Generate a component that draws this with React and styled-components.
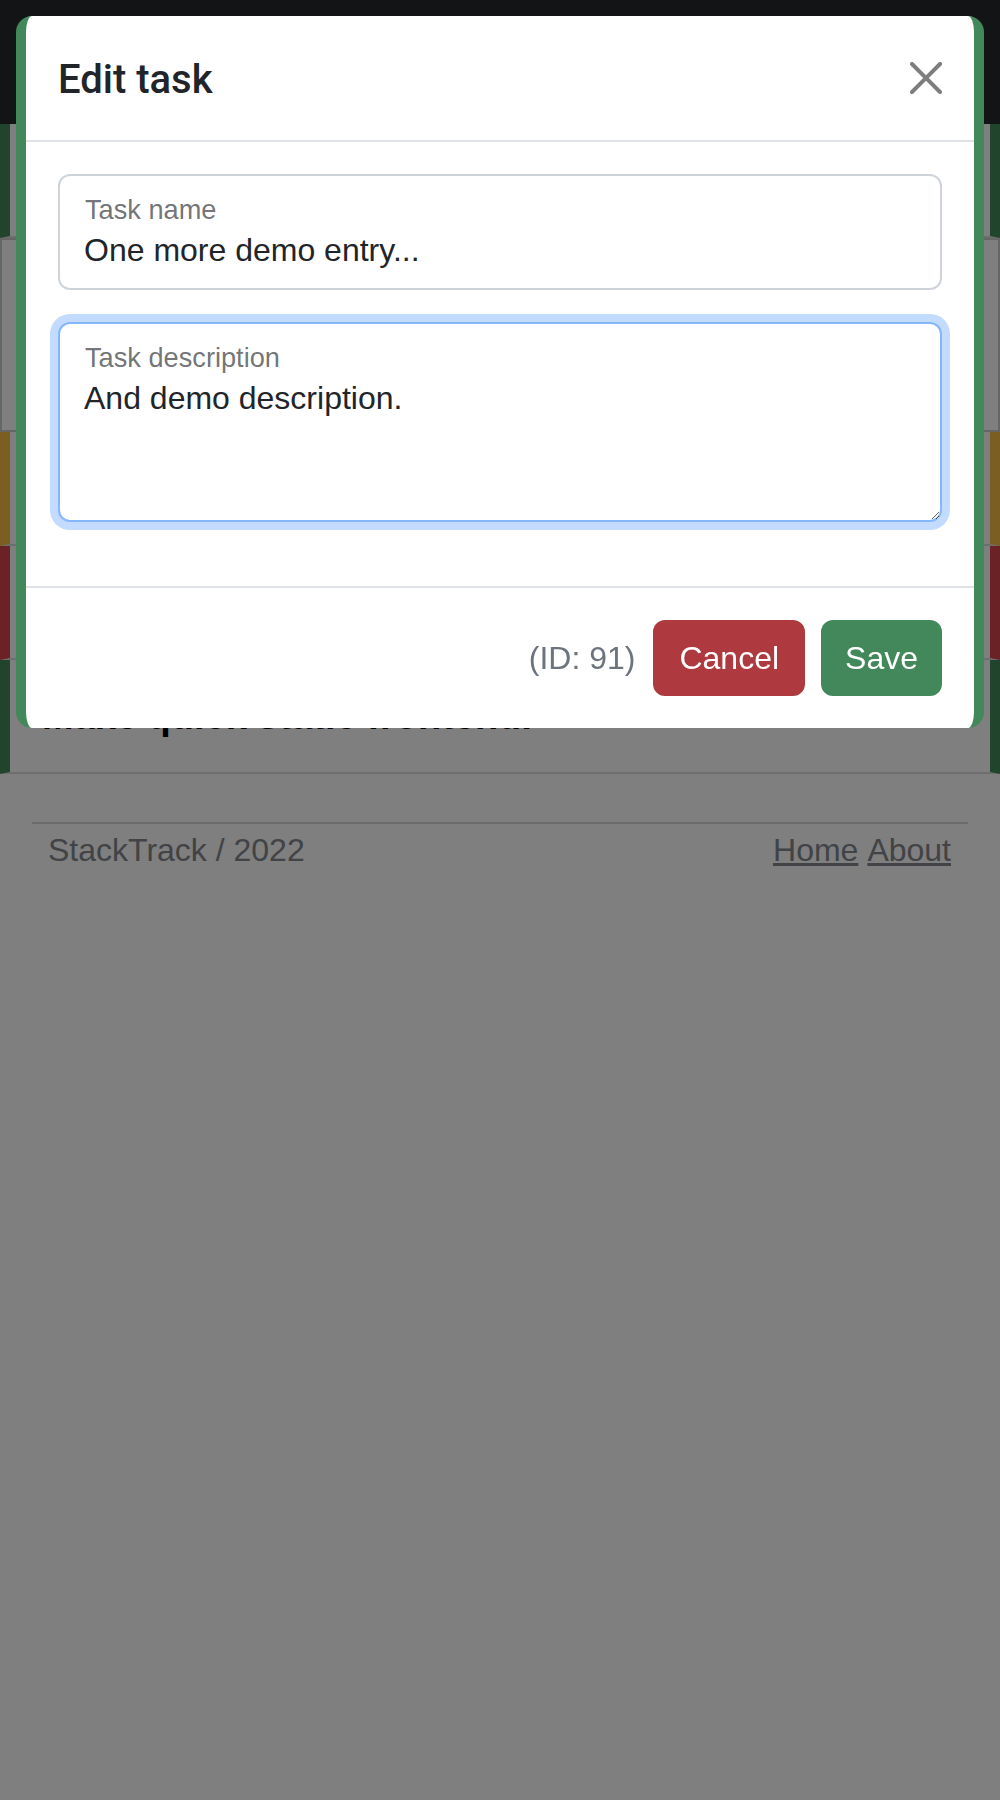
import React from 'react';
import styled, { createGlobalStyle, css } from 'styled-components';
import { ChevronDown } from 'lucide-react';

const GlobalStyle = createGlobalStyle`
  html, body { margin: 0; padding: 0; }
  body {
    font-family: "Liberation Sans", Arial, sans-serif;
    background: #ffffff;
    color: #212529;
  }
  *, *::before, *::after { box-sizing: border-box; }
`;

const Page = styled.div`
  min-height: 1800px;
  background: #ffffff;
`;

const Navbar = styled.nav`
  height: 124px;
  background: #26282c;
`;

const TaskList = styled.ul`
  list-style: none;
  margin: 0;
  padding: 0;
`;

const accents = {
  success: '#43885a',
  warning: '#f6be44',
  danger: '#d6444e',
  neutral: '#ffffff',
};

const TaskItem = styled.li`
  display: flex;
  flex-direction: column;
  justify-content: center;
  min-height: ${(p) => (p.$tall ? 194 : 114)}px;
  padding: 33px 32px;
  background: #ffffff;
  border-bottom: 2px solid #dcdcdc;
  border-left: 10px solid ${(p) => accents[p.$accent]};
  border-right: 10px solid ${(p) => accents[p.$accent]};
  ${(p) =>
    p.$accent === 'neutral' &&
    css`
      outline: 2px solid #cccccc;
      outline-offset: -2px;
    `}
`;

const TaskRow = styled.div`
  display: flex;
  align-items: center;
  justify-content: space-between;
`;

const TaskTitle = styled.h5`
  margin: 0;
  font-size: 38px;
  line-height: 46px;
  font-weight: 700;
  color: #000000;
`;

const SiteFooter = styled.footer`
  padding: 48px 32px 0;
`;

const Rule = styled.hr`
  margin: 0;
  border: 0;
  border-top: 2px solid #d6d6d6;
`;

const FooterRow = styled.div`
  display: flex;
  justify-content: space-between;
  align-items: center;
  padding: 2px 17px 0 16px;
  font-size: 32px;
  line-height: 48px;
  color: #82878c;
`;

const FooterLinks = styled.div`
  display: flex;
  gap: 9px;
`;

const FooterLink = styled.a`
  color: inherit;
  text-decoration: underline;
`;

const Backdrop = styled.div`
  position: fixed;
  inset: 0;
  background: rgba(0, 0, 0, 0.5);
`;

const ModalLayer = styled.div`
  position: fixed;
  inset: 0;
  padding: 16px;
  display: flex;
  flex-direction: column;
`;

const ModalContent = styled.div`
  display: flex;
  flex-direction: column;
  background: #ffffff;
  border-left: 10px solid #43885a;
  border-right: 10px solid #43885a;
  border-radius: 16px;
`;

const ModalHeader = styled.div`
  display: flex;
  align-items: center;
  justify-content: space-between;
  padding: 32px;
  border-bottom: 2px solid #dee2e6;
`;

const ModalTitle = styled.h5`
  margin: 0;
  padding-top: 3px;
  height: 60px;
  font-family: Roboto, "Liberation Sans", Arial, sans-serif;
  font-size: 40px;
  line-height: 57px;
  font-weight: 500;
  color: #212529;
`;

const CloseButton = styled.button`
  display: flex;
  align-items: center;
  justify-content: center;
  width: 32px;
  height: 32px;
  padding: 0;
  border: 0;
  background: transparent;
  opacity: 0.5;
  cursor: pointer;
`;

const ModalBody = styled.div`
  display: flex;
  flex-direction: column;
  gap: 32px;
  padding: 32px 32px 64px;
`;

const Field = styled.div`
  display: flex;
  flex-direction: column;
  height: ${(p) => p.$height}px;
  background: #ffffff;
  border: 2px solid ${(p) => (p.$focused ? '#86b7fe' : '#ced4da')};
  border-radius: 12px;
  ${(p) =>
    p.$focused &&
    css`
      box-shadow: 0 0 0 8px rgba(13, 110, 253, 0.25);
    `}
`;

const FieldLabel = styled.label`
  display: block;
  padding: 14px 25px 0;
  font-size: 27.2px;
  line-height: 40px;
  color: rgba(33, 37, 41, 0.65);
`;

const controlStyles = css`
  display: block;
  flex: 1;
  width: 100%;
  min-height: 0;
  margin: 0;
  font-family: inherit;
  font-size: 32px;
  line-height: 40px;
  color: #212529;
  background: transparent;
  border: 0;
  border-radius: 0 0 10px 10px;
  padding: 0 24px 18px;
  outline: none;
`;

const TextInput = styled.input`
  ${controlStyles}
`;

const TextArea = styled.textarea`
  ${controlStyles}
  resize: vertical;
`;

const ModalFooter = styled.div`
  display: flex;
  justify-content: flex-end;
  align-items: center;
  gap: 16px;
  padding: 32px;
  border-top: 2px solid #dee2e6;
`;

const IdText = styled.span`
  font-size: 32px;
  line-height: 48px;
  color: #6c757d;
  margin-right: 2px;
`;

const buttonColors = {
  danger: '#ae3a40',
  success: '#43885a',
};

const Button = styled.button`
  font-family: inherit;
  font-size: 32px;
  line-height: 48px;
  padding: 12px ${(p) => (p.$variant === 'success' ? 22 : 24)}px;
  color: #ffffff;
  background: ${(p) => buttonColors[p.$variant]};
  border: 2px solid ${(p) => buttonColors[p.$variant]};
  border-radius: 12px;
  cursor: pointer;
`;

const tasks = [
  { id: 1, accent: 'success' },
  { id: 2, accent: 'neutral', tall: true },
  { id: 3, accent: 'warning' },
  { id: 4, accent: 'danger' },
  { id: 5, accent: 'success', title: 'Make quick static frontend.' },
];

export default function App() {
  return (
    <>
      <GlobalStyle />
      <Page>
        <Navbar />
        <TaskList>
          {tasks.map((t) => (
            <TaskItem key={t.id} $accent={t.accent} $tall={t.tall}>
              {t.title && (
                <TaskRow>
                  <TaskTitle>{t.title}</TaskTitle>
                  <ChevronDown size={40} color="#000" strokeWidth={2} />
                </TaskRow>
              )}
            </TaskItem>
          ))}
        </TaskList>
        <SiteFooter>
          <Rule />
          <FooterRow>
            <span>StackTrack / 2022</span>
            <FooterLinks>
              <FooterLink href="#">Home</FooterLink>
              <FooterLink href="#">About</FooterLink>
            </FooterLinks>
          </FooterRow>
        </SiteFooter>
      </Page>
      <Backdrop />
      <ModalLayer>
        <ModalContent>
          <ModalHeader>
            <ModalTitle>Edit task</ModalTitle>
            <CloseButton aria-label="Close">
              <svg width="32" height="32" viewBox="0 0 16 16" fill="#000">
                <path d="M.293.293a1 1 0 0 1 1.414 0L8 6.586 14.293.293a1 1 0 1 1 1.414 1.414L9.414 8l6.293 6.293a1 1 0 0 1-1.414 1.414L8 9.414l-6.293 6.293a1 1 0 0 1-1.414-1.414L6.586 8 .293 1.707a1 1 0 0 1 0-1.414z" />
              </svg>
            </CloseButton>
          </ModalHeader>
          <ModalBody>
            <Field $height={116}>
              <FieldLabel htmlFor="task-name">Task name</FieldLabel>
              <TextInput id="task-name" defaultValue="One more demo entry..." />
            </Field>
            <Field $height={200} $focused>
              <FieldLabel htmlFor="task-desc">Task description</FieldLabel>
              <TextArea id="task-desc" defaultValue="And demo description." />
            </Field>
          </ModalBody>
          <ModalFooter>
            <IdText>(ID: 91)</IdText>
            <Button $variant="danger">Cancel</Button>
            <Button $variant="success">Save</Button>
          </ModalFooter>
        </ModalContent>
      </ModalLayer>
    </>
  );
}
